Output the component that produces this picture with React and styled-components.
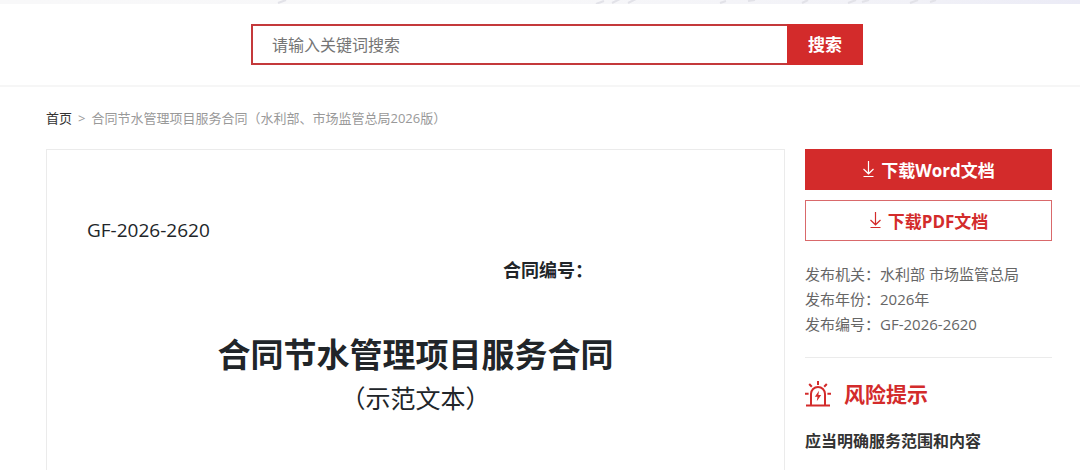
import React, { useState } from 'react';
import styled, { createGlobalStyle } from 'styled-components';

const RED = '#d32b2b';

const GlobalStyle = createGlobalStyle`
  * {
    box-sizing: border-box;
  }

  body {
    margin: 0;
    background: #fff;
    color: #212529;
    font-family: 'Open Sans', 'Noto Sans CJK SC', sans-serif;
  }

  h1, h2, h3, p, dl, dd {
    margin: 0;
  }

  button, input {
    font-family: inherit;
  }
`;

const Banner = styled.div`
  height: 4px;
  background: linear-gradient(90deg, #f8f8f9 0%, #f7f7f9 50%, #f1f1f7 85%, #ebebf6 100%);
`;

const BannerArt = styled.svg`
  display: block;
  width: 100%;
  height: 4px;
`;

const Container = styled.div`
  padding: 0 28px 0 46px;
`;

const SearchBar = styled.header`
  padding: 20px 0;
  border-bottom: 2px solid #f6f6f6;
`;

const SearchForm = styled.form`
  display: flex;
  max-width: 612px;
  height: 41px;
  margin: 0 189px 0 205px;
`;

const SearchInput = styled.input`
  flex: 1;
  min-width: 0;
  padding: 0 19px;
  border: 2px solid #c4393b;
  border-right: none;
  border-radius: 0;
  outline: none;
  font-size: 16px;
  color: #333;

  &::placeholder {
    color: #757575;
    opacity: 1;
  }
`;

const SearchButton = styled.button`
  width: 76px;
  padding: 0 0 2px;
  border: none;
  background: ${RED};
  color: #fff;
  font-size: 17px;
  font-weight: bold;
  cursor: pointer;
`;

const Breadcrumb = styled.nav`
  display: flex;
  gap: 6px;
  padding: 21px 0;
  font-size: 13px;
  line-height: 20px;
  color: #999;
`;

const HomeLink = styled.a`
  color: #333;
  text-decoration: none;

  &:hover {
    color: ${RED};
  }
`;

const Content = styled.div`
  display: grid;
  grid-template-columns: minmax(0, 1fr) 247px;
  gap: 20px;
  align-items: start;
`;

const Document = styled.article`
  padding: 65px 40px 60px;
  border: 1px solid #ebebeb;
`;

const DocCode = styled.p`
  font-size: 19px;
  line-height: 30px;
`;

const DocNumber = styled.p`
  margin-top: 10px;
  padding-left: 416px;
  font-size: 18px;
  font-weight: bold;
  line-height: 30px;
`;

const DocTitle = styled.h1`
  margin-top: 46px;
  font-size: 33px;
  font-weight: bold;
  line-height: 48px;
  text-align: center;
`;

const DocSubtitle = styled.p`
  font-size: 25px;
  line-height: 38px;
  text-align: center;
`;

const Downloads = styled.div`
  display: flex;
  flex-direction: column;
  gap: 10px;
`;

const DownloadButton = styled.button`
  display: flex;
  align-items: center;
  justify-content: center;
  gap: 6px;
  height: 41px;
  padding: 0 0 1px;
  border: 1px solid ${props => (props.$outline ? '#d9696b' : RED)};
  background: ${props => (props.$outline ? '#fff' : RED)};
  color: ${props => (props.$outline ? RED : '#fff')};
  font-size: 17px;
  font-weight: bold;
  cursor: pointer;
`;

const InfoList = styled.dl`
  padding: 21px 0 20px;
  border-bottom: 1px solid #ebebeb;
  font-size: 15px;
  line-height: 25px;
  color: #666;
`;

const InfoRow = styled.div`
  display: flex;
`;

const RiskTitle = styled.h2`
  display: flex;
  align-items: center;
  gap: 13px;
  margin-top: 20px;
  font-size: 21px;
  font-weight: bold;
  line-height: 32px;
  color: ${RED};
`;

const RiskItem = styled.h3`
  margin-top: 18px;
  font-size: 16px;
  font-weight: bold;
  line-height: 26px;
  color: #333;
`;

const DownloadIcon = () => (
  <svg width="13" height="18" viewBox="0 0 13 18" fill="none" stroke="currentColor" strokeWidth="1.2" aria-hidden="true">
    <path d="M6.5 1v12.5M1.5 9l5 4.8 5-4.8M1.5 16.5h10" />
  </svg>
);

const AlarmIcon = () => (
  <svg width="26" height="26" viewBox="0 0 26 26" fill="none" stroke="currentColor" strokeWidth="2" aria-hidden="true">
    <path d="M1 24.5h24M6 24.5V13a7 7 0 0 1 14 0v11.5" />
    <path d="M13 0v4M4.2 3l2.6 2.8M21.8 3l-2.6 2.8M0 12.7h3.6M22.4 12.7H26" />
    <path d="M14 9.8l-4.2 6h2.7l-.7 4.4 4.4-6.2h-2.8z" fill="currentColor" stroke="none" />
  </svg>
);

const info = [
  { label: '发布机关', value: '水利部 市场监管总局' },
  { label: '发布年份', value: '2026年' },
  { label: '发布编号', value: 'GF-2026-2620' },
];

const App = () => {
  const [keyword, setKeyword] = useState('');

  return (
    <>
      <GlobalStyle />
      <Banner>
        <BannerArt viewBox="0 0 1080 4" preserveAspectRatio="none" fill="none" stroke="#e2e2e8" strokeWidth="2" aria-hidden="true">
          <path d="M278 3l8-3M596 4l8-3M612 3l8-4M628 3l8-4M720 3l6-2M748 1l7-1M802 3l6-3M848 3l8-3M862 2l7-2M910 3l8-3M930 2l6-2" />
        </BannerArt>
      </Banner>

      <SearchBar>
        <Container>
          <SearchForm role="search" onSubmit={e => e.preventDefault()}>
            <SearchInput
              type="text"
              aria-label="请输入关键词搜索"
              placeholder="请输入关键词搜索"
              value={keyword}
              onChange={e => setKeyword(e.target.value)}
            />
            <SearchButton type="submit">搜索</SearchButton>
          </SearchForm>
        </Container>
      </SearchBar>

      <Container>
        <Breadcrumb>
          <HomeLink href="#">首页</HomeLink>
          <span>&gt;</span>
          <span>合同节水管理项目服务合同（水利部、市场监管总局2026版）</span>
        </Breadcrumb>

        <Content>
          <Document>
            <DocCode>GF-2026-2620</DocCode>
            <DocNumber>合同编号：</DocNumber>
            <DocTitle>合同节水管理项目服务合同</DocTitle>
            <DocSubtitle>（示范文本）</DocSubtitle>
          </Document>

          <aside>
            <Downloads>
              <DownloadButton type="button">
                <DownloadIcon />
                下载Word文档
              </DownloadButton>
              <DownloadButton type="button" $outline>
                <DownloadIcon />
                下载PDF文档
              </DownloadButton>
            </Downloads>

            <InfoList>
              {info.map(item => (
                <InfoRow key={item.label}>
                  <dt>{item.label}：</dt>
                  <dd>{item.value}</dd>
                </InfoRow>
              ))}
            </InfoList>

            <RiskTitle>
              <AlarmIcon />
              风险提示
            </RiskTitle>
            <RiskItem>应当明确服务范围和内容</RiskItem>
          </aside>
        </Content>
      </Container>
    </>
  );
};

export default App;
